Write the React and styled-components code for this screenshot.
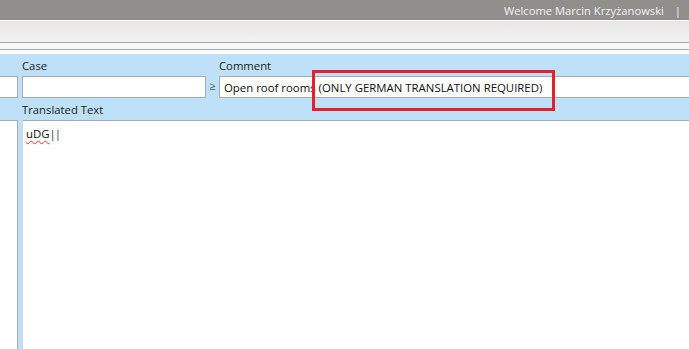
import React from "react";
import styled, { createGlobalStyle } from "styled-components";

const Global = createGlobalStyle`
  html, body { margin: 0; padding: 0; background: #fff; }
  body { font-family: "Open Sans", "Noto Sans", sans-serif; overflow: hidden; }
  #root { width: 689px; height: 349px; overflow: hidden; }
`;

const Page = styled.div`
  width: 689px;
  height: 349px;
  display: flex;
  flex-direction: column;
  background: #fff;
`;

const TopBar = styled.div`
  height: 20px;
  flex: none;
  background: #908f8c;
  display: flex;
  align-items: center;
  justify-content: flex-end;
  padding-right: 8px;
  color: #f2f2f2;
  font-size: 11.2px;
`;

const Sep = styled.span`
  margin-left: 11px;
`;

const Toolbar = styled.div`
  flex: none;
  background: linear-gradient(#e6e6e6, #f3f3f3);
  border-top: 1px solid #fafafa;
  border-bottom: 1px solid #a6a6a6;
  box-sizing: border-box;
  height: 23px;
`;

const Strip = styled.div`
  height: 7px;
  flex: none;
  background: #f8f8f8;
  border-bottom: 1px solid #a9a9a9;
  box-sizing: border-box;
`;

const Gap = styled.div`
  height: 4px;
  flex: none;
  background: #fafafa;
`;

const Form = styled.div`
  flex: 1;
  background: #bee0f8;
  display: flex;
  flex-direction: column;
  min-height: 0;
`;

const LabelRow = styled.div`
  height: 22px;
  flex: none;
  display: flex;
  align-items: center;
  padding-left: 22px;
  font-size: 11.3px;
  color: #222;
  margin-top: ${(p) => p.$mt || "0"};
`;

const Label = styled.span`
  width: ${(p) => p.$w || "auto"};
  flex: none;
`;

const InputRow = styled.div`
  height: 22px;
  flex: none;
  display: flex;
  align-items: stretch;
`;

const Box = styled.div`
  box-sizing: border-box;
  background: #fff;
  border-top: 1px solid #aaaaaa;
  border-bottom: 1px solid #aaaaaa;
  width: ${(p) => p.$w};
  flex: ${(p) => (p.$grow ? "1" : "none")};
  margin-left: ${(p) => p.$ml || "0"};
  border-left: ${(p) => (p.$noLeft ? "none" : "1px solid #aaaaaa")};
  border-right: ${(p) => (p.$noRight ? "none" : "1px solid #aaaaaa")};
  display: flex;
  align-items: center;
  padding-left: 4px;
  font-size: 11.4px;
  color: #111;
  white-space: nowrap;
  position: relative;
`;

const Ge = styled.span`
  width: 13px;
  flex: none;
  display: flex;
  align-items: center;
  justify-content: center;
  font-size: 11px;
  color: #555;
  margin-top: -4px;
`;

const Highlight = styled.span`
  position: absolute;
  left: 92px;
  top: -7px;
  width: 243px;
  height: 41px;
  border: 3px solid #e5202a;
  box-sizing: border-box;
  pointer-events: none;
`;

const AreaRow = styled.div`
  flex: 1;
  display: flex;
  min-height: 0;
`;

const AreaSide = styled.div`
  width: 18px;
  flex: none;
  background: #fff;
  border-right: 1px solid #aaaaaa;
  border-top: 1px solid #aaaaaa;
  box-sizing: border-box;
`;

const TextArea = styled.div`
  flex: 1;
  margin-left: 4px;
  background: #fff;
  border-top: 1px solid #aaaaaa;
  border-left: 1px solid #d8d8d8;
  padding: 5px 3px;
  font-size: 11.4px;
  color: #111;
`;

const Misspelled = styled.span`
  text-decoration: underline wavy #e03030;
  text-decoration-thickness: 1px;
  text-underline-offset: 2px;
`;

const Caret = styled.span`
  color: #3a3a3a;
  letter-spacing: -1px;
`;

export default function App() {
  return (
    <>
      <Global />
      <Page>
        <TopBar>
          Welcome Marcin Krzyżanowski<Sep>|</Sep>
        </TopBar>
        <Toolbar />
        <Strip />
        <Gap />
        <Form>
          <LabelRow>
            <Label $w="197px">Case</Label>
            <Label>Comment</Label>
          </LabelRow>
          <InputRow>
            <Box $w="18px" $noLeft />
            <Box $w="184px" $ml="4px" />
            <Ge>≥</Ge>
            <Box $grow $noRight>
              Open roof rooms (ONLY GERMAN TRANSLATION REQUIRED)
              <Highlight />
            </Box>
          </InputRow>
          <LabelRow>
            <Label>Translated Text</Label>
          </LabelRow>
          <AreaRow>
            <AreaSide />
            <TextArea>
              <Misspelled>uDG</Misspelled>
              <Caret>||</Caret>
            </TextArea>
          </AreaRow>
        </Form>
      </Page>
    </>
  );
}
